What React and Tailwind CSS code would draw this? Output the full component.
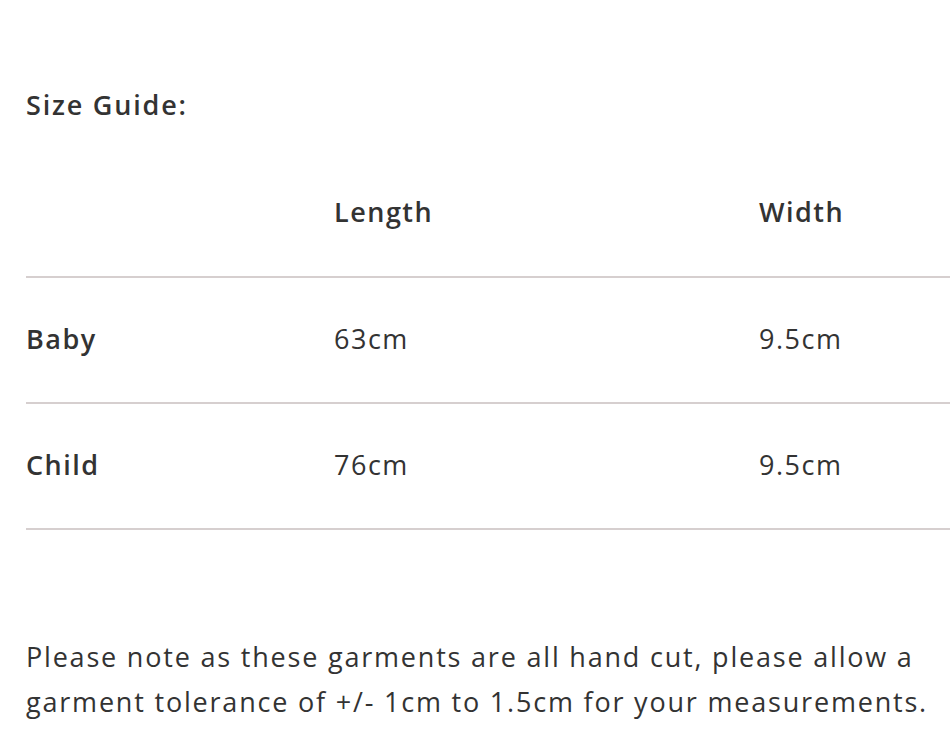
const rows = [
  { name: 'Baby', length: '63cm', width: '9.5cm' },
  { name: 'Child', length: '76cm', width: '9.5cm' },
]

export default function App() {
  return (
    <div className="w-[950px] h-[750px] overflow-hidden bg-white text-[#333333] font-['Open_Sans',sans-serif] tracking-[1.5px]">
      <div className="pl-[26px] pt-[88px]">
        <h2 className="text-[27px] leading-[34px] font-semibold tracking-[1.8px]">Size Guide:</h2>
        <div className="w-[1000px] mt-[30px]">
          <div className="flex items-center h-[126px] pb-[3px] border-b-2 border-[#d6cfcf] text-[27px] font-semibold">
            <div className="w-[308px]" />
            <div className="w-[425px]">Length</div>
            <div>Width</div>
          </div>
          {rows.map(r => (
            <div key={r.name} className="flex items-center h-[126px] pb-[2px] border-b-2 border-[#d6cfcf] text-[27px]">
              <div className="w-[308px] font-semibold">{r.name}</div>
              <div className="w-[425px]">{r.length}</div>
              <div>{r.width}</div>
            </div>
          ))}
        </div>
        <p className="mt-[104px] text-[27px] leading-[45px] w-[924px] tracking-[1.8px]">
          Please note as these garments are all hand cut, please allow a garment tolerance of +/- 1cm to 1.5cm for your measurements.
        </p>
      </div>
    </div>
  )
}
